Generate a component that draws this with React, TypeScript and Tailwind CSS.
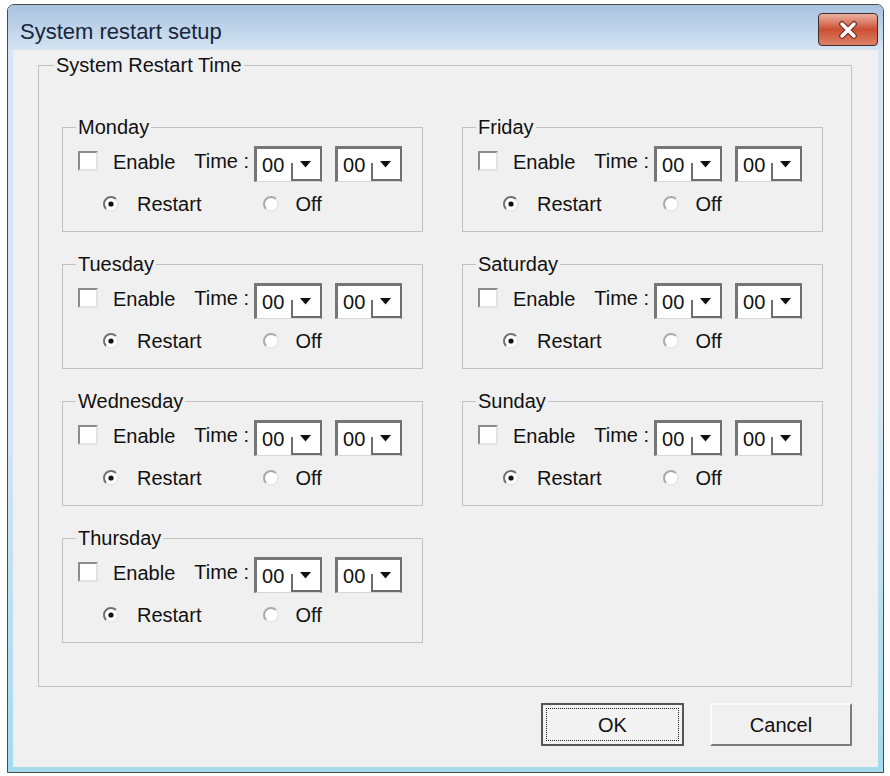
import React from 'react';

const Checkbox = () => (
  <div className="w-[20px] h-[20px] bg-white border-2 border-t-[#8c8c8c] border-l-[#8c8c8c] border-r-[#e2e2e2] border-b-[#e2e2e2]" />
);

const Radio = ({ checked }: { checked?: boolean }) => (
  <svg width="16" height="16" viewBox="0 0 16 16">
    <circle cx="8" cy="8" r="7" fill="#fff" />
    <path d="M12.95 3.05 A7 7 0 0 0 3.05 12.95" fill="none" stroke={checked ? '#6f6f6f' : '#a9a9a9'} strokeWidth="2" />
    <path d="M3.05 12.95 A7 7 0 0 0 12.95 3.05" fill="none" stroke="#e6e6e6" strokeWidth="1.5" />
    {checked && <circle cx="8" cy="8" r="2.6" fill="#111" />}
  </svg>
);

const Combo = ({ w }: { w: string }) => (
  <div className={`flex h-[36px] ${w} bg-white border-t-[3px] border-l-[3px] border-r-2 border-b border-t-[#767676] border-l-[#767676] border-r-[#6e6e6e] border-b-[#d6d6d6]`}>
    <div className="flex-1 flex items-center pl-[5px] text-[20px] leading-[20px]">00</div>
    <div className="relative w-[29px] flex items-center justify-center border-b-2 border-[#6e6e6e]">
      <div className="absolute left-0 bottom-0 h-[55%] border-l-2 border-[#6e6e6e]" />
      <svg width="11" height="7" viewBox="0 0 11 7">
        <path d="M0 0 H11 L5.5 6.5 Z" fill="#111" />
      </svg>
    </div>
  </div>
);

const Day = ({ name }: { name: string }) => (
  <fieldset className="w-[361px] h-[115px] border border-[#c2c2c2]">
    <legend className="ml-[13px] px-[2px] text-[20px] leading-[20px]">{name}</legend>
    <div className="flex items-center mt-[9px] h-[36px]">
      <div className="ml-[15px] -mt-[6px]">
        <Checkbox />
      </div>
      <span className="ml-[15px] -mt-[4px] text-[20px] leading-[20px]">Enable</span>
      <span className="ml-[19px] -mt-[6px] text-[20px] leading-[20px]">Time :</span>
      <div className="ml-[5px]">
        <Combo w="w-[68px]" />
      </div>
      <div className="ml-[13px]">
        <Combo w="w-[67px]" />
      </div>
    </div>
    <div className="flex items-center mt-[10px] h-[20px]">
      <div className="ml-[40px] mt-[3px] flex">
        <Radio checked />
      </div>
      <span className="ml-[18px] mt-[3px] text-[20px] leading-[20px]">Restart</span>
      <div className="ml-[62px] mt-[3px] flex">
        <Radio />
      </div>
      <span className="ml-[16px] mt-[3px] text-[20px] leading-[20px]">Off</span>
    </div>
  </fieldset>
);

export default function App() {
  return (
    <div className="w-[890px] h-[776px] bg-white pt-[4px] pl-[7px] font-['Liberation_Sans',Arial,sans-serif] text-[#111]">
      <div className="w-[877px] h-[769px] flex flex-col border border-[#4b4b4b] rounded-t-[7px] overflow-hidden bg-[#d2e2f2]">
        {/* title bar */}
        <div className="h-[45px] shrink-0 flex items-start bg-linear-to-b from-[#a8c2e0] to-[#d5e4f3]">
          <div className="flex-1 pl-[12px] pt-[16px] text-[22px] leading-[22px] text-[#18263a]">System restart setup</div>
          <div className="mt-[8px] mr-[5px] w-[60px] h-[33px] rounded-[4px] border border-[#3b3030] bg-linear-to-b from-[#eab0a2] via-[#cc4f33] to-[#dc8066] flex items-center justify-center">
            <svg width="26" height="20" viewBox="0 0 26 20">
              <path d="M7 4 L19 16 M19 4 L7 16" stroke="#7a3424" strokeWidth="6" strokeLinecap="round" />
              <path d="M7 4 L19 16 M19 4 L7 16" stroke="#ffffff" strokeWidth="3.4" strokeLinecap="round" />
            </svg>
          </div>
        </div>

        {/* body */}
        <div className="flex-1 flex flex-col px-[5px] pb-[5px] bg-linear-to-b from-[#d6e6f4] via-[#d6e6f4] to-[#a3dbee]">
          <div className="flex-1 flex flex-col bg-[#f0f0f0]">
            <fieldset className="mt-[5px] ml-[25px] w-[814px] h-[632px] border border-[#c2c2c2]">
              <legend className="ml-[15px] px-[2px] text-[20px] leading-[20px]">System Restart Time</legend>
              <div className="flex gap-[39px] pl-[23px] pt-[42px]">
                <div className="flex flex-col gap-[22px]">
                  <Day name="Monday" />
                  <Day name="Tuesday" />
                  <Day name="Wednesday" />
                  <Day name="Thursday" />
                </div>
                <div className="flex flex-col gap-[22px]">
                  <Day name="Friday" />
                  <Day name="Saturday" />
                  <Day name="Sunday" />
                </div>
              </div>
            </fieldset>

            <div className="flex justify-end gap-[26px] mt-[16px] mr-[26px]">
              <button className="w-[143px] h-[43px] border-2 border-[#555] bg-[#f3f3f3] p-[3px]">
                <div className="w-full h-full border border-dotted border-[#222] flex items-center justify-center text-[20px] leading-[20px]">OK</div>
              </button>
              <button className="w-[142px] h-[43px] border-2 border-t-[#fbfbfb] border-l-[#fbfbfb] border-r-[#7c7c7c] border-b-[#7c7c7c] bg-[#f0f0f0] text-[20px] leading-[20px]">
                Cancel
              </button>
            </div>
          </div>
        </div>
      </div>
    </div>
  );
}
